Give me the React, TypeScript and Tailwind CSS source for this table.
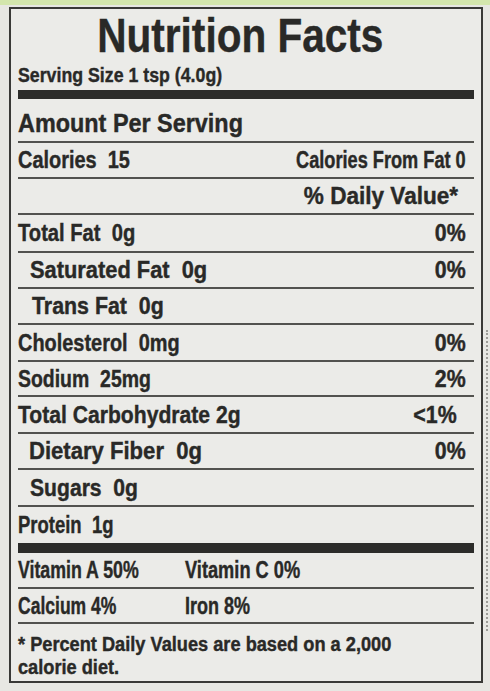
import React from 'react';

const font = { fontFamily: "'Liberation Sans', Arial, sans-serif" };

type Row = { label: string; sx: string; dv?: string; dvPad?: string; indent?: string; h: string };

const rows: Row[] = [
    { label: 'Total Fat  0g', sx: 'scale-x-[0.84]', dv: '0%', h: 'h-[38px]' },
    { label: 'Saturated Fat  0g', sx: 'scale-x-[0.91]', dv: '0%', indent: 'pl-[12px]', h: 'h-[36px]' },
    { label: 'Trans Fat  0g', sx: 'scale-x-[0.89]', indent: 'pl-[14px]', h: 'h-[36px]' },
    { label: 'Cholesterol  0mg', sx: 'scale-x-[0.83]', dv: '0%', h: 'h-[37px]' },
    { label: 'Sodium  25mg', sx: 'scale-x-[0.81]', dv: '2%', h: 'h-[35px]' },
    { label: 'Total Carbohydrate 2g', sx: 'scale-x-[0.88]', dv: '<1%', dvPad: 'pr-[17px]', h: 'h-[37px]' },
    { label: 'Dietary Fiber  0g', sx: 'scale-x-[0.92]', dv: '0%', indent: 'pl-[11px]', h: 'h-[36px]' },
    { label: 'Sugars  0g', sx: 'scale-x-[0.88]', indent: 'pl-[12px]', h: 'h-[37px]' },
];

const App = () => {
    return (
        <div className="w-[490px] h-[691px] bg-[#e7e7e3] overflow-hidden relative" style={font}>
            {/* green strip from the package */}
            <div className="h-[5px] bg-[#d3e6ad]" />

            {/* perforation on the right */}
            <div className="absolute left-[486px] top-[330px] bottom-[60px] border-l-2 border-dotted border-[#9c9c98]" />

            {/* Label */}
            <div className="ml-[9px] mt-[2px] w-[474px] h-[676px] border-2 border-[#393937] bg-[#ebebe8] px-[7px] text-[#292927] font-bold flex flex-col [-webkit-text-stroke:0.4px_#292927]">
                {/* Title */}
                <div className="h-[51px] pt-[5px] pr-[12px] flex justify-center text-[48px] leading-[44px]">
                    <span className="inline-block whitespace-pre scale-x-[0.845]">Nutrition Facts</span>
                </div>
                <div className="h-[30px] pt-[4px] text-[21px] leading-[21px]">
                    <span className="inline-block whitespace-pre origin-left scale-x-[0.845]">Serving Size 1 tsp (4.0g)</span>
                </div>
                <div className="h-[9px] bg-[#2c2c2a]" />

                {/* Amount per serving */}
                <div className="h-[44px] pt-[5px] border-b-2 border-[#52524f] flex items-center text-[26px] leading-none">
                    <span className="inline-block whitespace-pre origin-left scale-x-[0.9]">Amount Per Serving</span>
                </div>
                <div className="h-[36px] pr-[8px] border-b-2 border-[#52524f] flex items-center justify-between text-[24px] leading-none">
                    <span className="inline-block whitespace-pre origin-left scale-x-[0.83]">Calories  15</span>
                    <span className="inline-block whitespace-pre origin-right text-[23px] scale-x-[0.79]">Calories From Fat 0</span>
                </div>
                <div className="h-[36px] pr-[16px] border-b-2 border-[#52524f] flex items-center justify-end text-[24px] leading-none">
                    <span className="inline-block whitespace-pre origin-right scale-x-[0.94]">% Daily Value*</span>
                </div>

                {/* Nutrient rows */}
                {rows.map((r) => (
                    <div
                        key={r.label}
                        className={`${r.h} border-b-2 border-[#52524f] flex items-center justify-between text-[24px] leading-none`}
                    >
                        <span className={r.indent ?? ''}>
                            <span className={`inline-block whitespace-pre origin-left ${r.sx}`}>{r.label}</span>
                        </span>
                        {r.dv && (
                            <span className={r.dvPad ?? 'pr-[8px]'}>
                                <span className="inline-block origin-right scale-x-[0.89]">{r.dv}</span>
                            </span>
                        )}
                    </div>
                ))}
                <div className="h-[36px] flex items-center text-[24px] leading-none">
                    <span className="inline-block whitespace-pre origin-left scale-x-[0.77]">Protein  1g</span>
                </div>
                <div className="h-[10px] bg-[#2c2c2a]" />

                {/* Vitamins */}
                <div className="h-[36px] border-b-2 border-[#52524f] flex items-center text-[24px] leading-none">
                    <span className="w-[167px]">
                        <span className="inline-block whitespace-pre origin-left scale-x-[0.74]">Vitamin A 50%</span>
                    </span>
                    <span className="inline-block whitespace-pre origin-left scale-x-[0.76]">Vitamin C 0%</span>
                </div>
                <div className="h-[35px] border-b-2 border-[#52524f] flex items-center text-[24px] leading-none">
                    <span className="w-[167px]">
                        <span className="inline-block whitespace-pre origin-left scale-x-[0.73]">Calcium 4%</span>
                    </span>
                    <span className="inline-block whitespace-pre origin-left scale-x-[0.75]">Iron 8%</span>
                </div>

                {/* Footnote */}
                <div className="flex-1 pt-[9px] text-[20px] leading-[22.5px]">
                    <span className="block whitespace-pre origin-left scale-x-[0.91]">* Percent Daily Values are based on a 2,000</span>
                    <span className="block whitespace-pre origin-left scale-x-[0.91]">calorie diet.</span>
                </div>
            </div>
        </div>
    );
};

export default App;
